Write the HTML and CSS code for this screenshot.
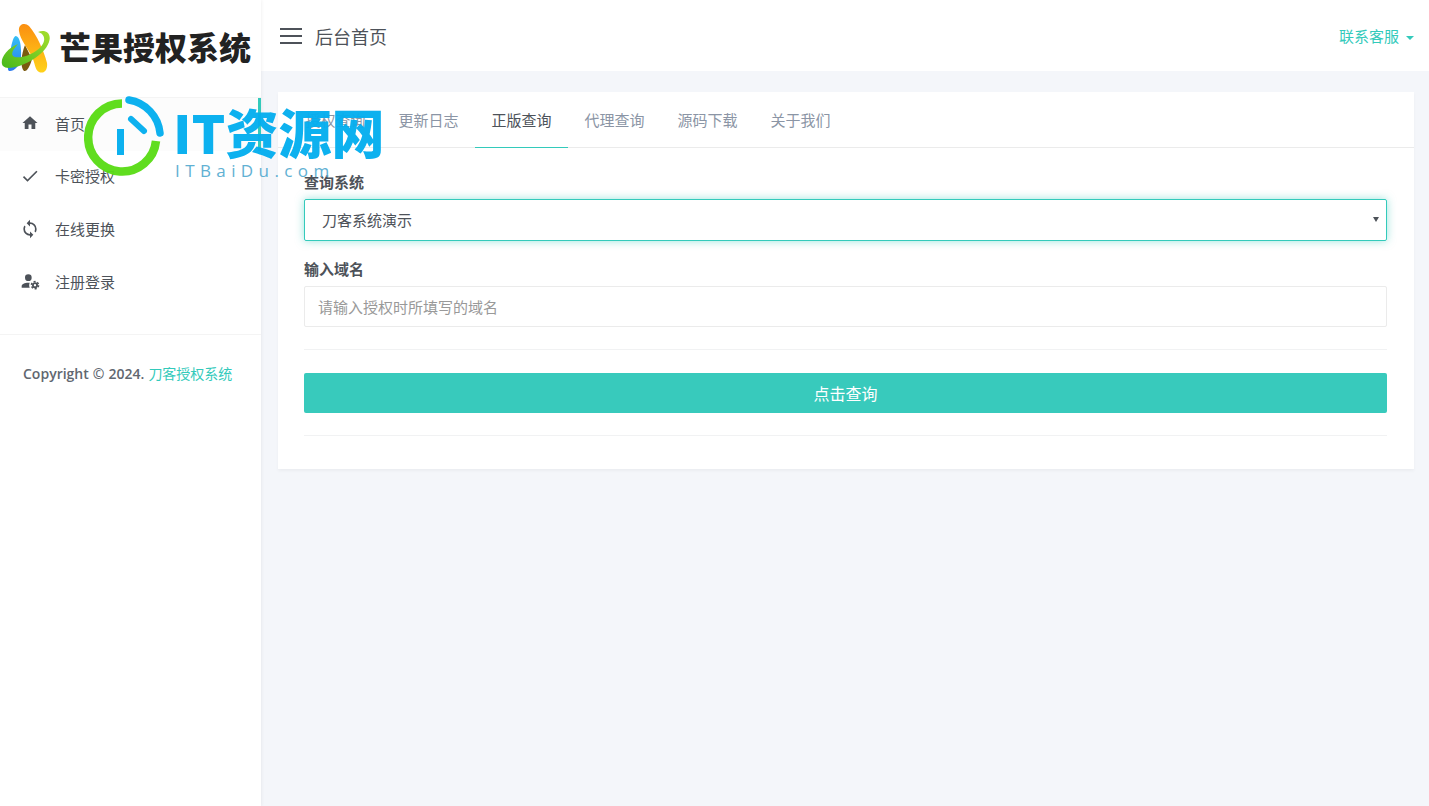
FILE: index.html
```html
<!DOCTYPE html>
<html lang="zh-CN">
<head>
    <meta charset="UTF-8">
    <title>后台首页</title>
    <link rel="stylesheet" href="styles.css">
</head>
<body>
    <aside class="sidebar">
        <div class="logo">
            <svg class="logo-mark" width="52" height="52" viewBox="0 0 52 52">
                <defs>
                    <linearGradient id="legOrange" x1="0" y1="0" x2="0" y2="1">
                        <stop offset="0" stop-color="#fb8f10"/>
                        <stop offset="1" stop-color="#ffd21a"/>
                    </linearGradient>
                    <linearGradient id="legBlue" x1="0" y1="0" x2="0" y2="1">
                        <stop offset="0" stop-color="#35c0f5"/>
                        <stop offset="1" stop-color="#2a78ee"/>
                    </linearGradient>
                    <linearGradient id="swoosh" x1="0" y1="1" x2="1" y2="0">
                        <stop offset="0" stop-color="#46b81c"/>
                        <stop offset="1" stop-color="#a5de2c"/>
                    </linearGradient>
                </defs>
                <path d="M9 48C7 47 8 40 10 31C11 23 13 14 15.500 13C21 13 21.500 28 21 36C20 43 13 49 9 48Z" fill="url(#legBlue)"/>
                <path d="M24 48C20 44 21 32 25 22L32 36C30 43 27 49 24 48Z" fill="#7a5a10"/>
                <path d="M19 8C18 1 25 -1 29 3C37 12 44 28 47 40C48 48 43 51 39 49C35 47 35 40 32 34C28 25 20 17 19 8Z" fill="url(#legOrange)"/>
                <path d="M3 43C-1 38 5 26 18 21C12 28 10 32 15 34C25 36 42 27 44 18C45 13 42 10 38 9C45 6 51 10 49.500 17C47 30 27 42 13 44.500C8 45.500 5 45 3 43Z" fill="url(#swoosh)"/>
            </svg>
            <span class="logo-text">芒果授权系统</span>
        </div>
        <ul class="menu">
            <li class="active">
                <svg class="menu-icon" width="20" height="20" viewBox="-1.300 -1.300 26.600 26.600"><path d="M10,20V14H14V20H19V12H22L12,3L2,12H5V20H10Z"/></svg>
                <span>首页</span>
            </li>
            <li>
                <svg class="menu-icon" width="20" height="20" viewBox="0 0 24 24"><path d="M21,7L9,19L3.500,13.500L4.910,12.090L9,16.170L19.590,5.590L21,7Z"/></svg>
                <span>卡密授权</span>
            </li>
            <li>
                <svg class="menu-icon" width="20" height="20" viewBox="0 0 24 24"><path d="M12,18A6,6 0 0,1 6,12C6,11 6.250,10.030 6.700,9.200L5.240,7.740C4.460,8.970 4,10.430 4,12A8,8 0 0,0 12,20V23L16,19L12,15M12,4V1L8,5L12,9V6A6,6 0 0,1 18,12C18,13 17.750,13.970 17.300,14.800L18.760,16.260C19.540,15.030 20,13.570 20,12A8,8 0 0,0 12,4Z"/></svg>
                <span>在线更换</span>
            </li>
            <li>
                <svg class="menu-icon" width="20" height="20" viewBox="0 0 24 24"><circle cx="10" cy="8" r="4"/><path d="M10 14C5.580 14 2 15.790 2 18V20H11.680A7 7 0 0 1 11 17A7 7 0 0 1 11.680 14.110C11.130 14.040 10.570 14 10 14Z"/><circle cx="18" cy="17" r="2.500" fill="none" stroke="#4d5259" stroke-width="2.200"/><circle cx="18" cy="17" r="4.300" fill="none" stroke="#4d5259" stroke-width="1.800" stroke-dasharray="2.500 2"/></svg>
                <span>注册登录</span>
            </li>
        </ul>
        <div class="copyright">Copyright © 2024. <a href="#">刀客授权系统</a></div>
    </aside>

    <div class="main">
        <header class="topbar">
            <div class="topbar-left">
                <div class="toggle"><i></i><i></i><i></i></div>
                <span class="page-title">后台首页</span>
            </div>
            <a class="service" href="#">联系客服<b class="caret"></b></a>
        </header>

        <div class="content">
            <div class="card">
                <ul class="tabs">
                    <li>授权查询</li>
                    <li>更新日志</li>
                    <li class="active">正版查询</li>
                    <li>代理查询</li>
                    <li>源码下载</li>
                    <li>关于我们</li>
                </ul>
                <div class="card-body">
                    <div class="form-group">
                        <label>查询系统</label>
                        <div class="select-box">
                            <span>刀客系统演示</span>
                            <b class="select-arrow"></b>
                        </div>
                    </div>
                    <div class="form-group">
                        <label>输入域名</label>
                        <input class="form-input" type="text" placeholder="请输入授权时所填写的域名">
                    </div>
                    <hr class="divider">
                    <button class="submit-btn">点击查询</button>
                    <hr class="divider">
                </div>
            </div>
        </div>
    </div>

    <!-- site watermark laid over the page -->
    <div class="watermark">
        <svg class="wm-ring" width="80" height="82" viewBox="0 0 80 82">
            <path d="M38 7.500A34 34 0 1 0 72 45" fill="none" stroke="#5adc16" stroke-width="8.500"/>
            <path d="M45 4A37 37 0 0 1 76 37" fill="none" stroke="#04aeef" stroke-width="7.500" stroke-linecap="round"/>
            <path d="M47 23L60 35" fill="none" stroke="#04aeef" stroke-width="6" stroke-linecap="round"/>
            <rect x="33" y="33" width="7" height="26" fill="#04aeef"/>
        </svg>
        <div class="wm-name">IT资源网</div>
        <div class="wm-url">ITBaiDu.com</div>
    </div>
</body>
</html>
```

FILE: styles.css
```css
* {
    margin: 0;
    padding: 0;
    box-sizing: border-box;
}

body {
    font-family: "Noto Sans CJK SC", "Open Sans", sans-serif;
    font-size: 15px;
    color: #4d5259;
    background-color: #f4f6fa;
    display: flex;
    height: 806px;
    overflow: hidden;
}

a {
    text-decoration: none;
}

ul {
    list-style: none;
}

.sidebar {
    width: 261px;
    flex-shrink: 0;
    background: #fff;
    box-shadow: 1px 0 3px rgba(0, 0, 0, 0.05);
    position: relative;
}

.logo {
    height: 98px;
    display: flex;
    align-items: center;
    border-bottom: 1px solid #f4f4f4;
}

.logo-mark {
    margin-right: 7px;
    margin-top: 0;
}

.logo-text {
    font-size: 32px;
    font-weight: 900;
    color: #222;
    margin-top: -6px;
    white-space: nowrap;
}

.menu li {
    height: 52.670px;
    display: flex;
    align-items: center;
    padding-left: 20px;
    padding-bottom: 2px;
    color: #4d5259;
}

.menu li.active {
    background: #fcfcfc;
    border-right: 3px solid #33cabb;
}

.menu-icon {
    margin-right: 15px;
    fill: #4d5259;
}

.copyright {
    margin-top: 25px;
    padding: 28px 23px 0;
    border-top: 1px solid #f4f4f4;
    font-family: "Open Sans", "Noto Sans CJK SC", sans-serif;
    font-size: 14px;
    font-weight: 600;
    word-spacing: 0.400px;
    color: #616770;
    white-space: nowrap;
}

.copyright a {
    color: #33cabb;
    font-family: "Noto Sans CJK SC", sans-serif;
    font-weight: 400;
}

.main {
    flex: 1;
    min-width: 0;
}

.topbar {
    height: 71px;
    background: #fff;
    display: flex;
    justify-content: space-between;
    align-items: center;
    padding: 0 15px 0 19px;
}

.topbar-left {
    display: flex;
    align-items: center;
}

.toggle {
    width: 22px;
    margin-right: 13px;
}

.toggle i {
    display: block;
    height: 2px;
    background: #4d5259;
    margin-bottom: 5px;
}

.toggle i:last-child {
    margin-bottom: 0;
}

.page-title {
    font-size: 18px;
    color: #4d5259;
}

.service {
    color: #33cabb;
    font-size: 15px;
}

.caret {
    display: inline-block;
    margin-left: 7px;
    vertical-align: 2px;
    border-top: 4.500px solid #33cabb;
    border-left: 4.500px solid transparent;
    border-right: 4.500px solid transparent;
}

.content {
    padding: 21px 15px 21px 17px;
}

.card {
    background: #fff;
    box-shadow: 0 2px 3px rgba(0, 0, 0, 0.04);
}

.tabs {
    display: flex;
    height: 56px;
    padding-left: 11px;
    border-bottom: 1px solid #ebebeb;
}

.tabs li {
    padding: 0 16.500px;
    line-height: 55px;
    height: 56px;
    color: #8b95a5;
    white-space: nowrap;
}

.tabs li.active {
    color: #4d5259;
    border-bottom: 1px solid #33cabb;
}

.card-body {
    padding: 24px 27px 33px 26px;
}

.form-group {
    margin-bottom: 18px;
}

.form-group label {
    display: block;
    font-weight: 600;
    line-height: 20px;
    margin-bottom: 7px;
    color: #4d5259;
}

.select-box {
    height: 42px;
    padding: 0 7px 2px 17px;
    display: flex;
    align-items: center;
    justify-content: space-between;
    border: 1px solid #33cabb;
    border-radius: 2px;
    box-shadow: 0 0 8px rgba(51, 202, 187, 0.5);
}

.select-arrow {
    border-top: 5px solid #4d5259;
    border-left: 3px solid transparent;
    border-right: 3px solid transparent;
}

.form-input {
    display: block;
    width: 100%;
    height: 41px;
    padding: 0 13px;
    font: inherit;
    color: #4d5259;
    border: 1px solid #ebebeb;
    border-radius: 2px;
    outline: none;
}

.form-input::placeholder {
    color: #999;
}

.divider {
    border: none;
    border-top: 1px solid #f1f2f3;
}

.form-group + .divider {
    margin-top: 22px;
}

.submit-btn {
    display: block;
    width: 100%;
    height: 40px;
    margin: 23px 0 22px;
    background: #38cabc;
    color: #fff;
    font: inherit;
    font-size: 16px;
    font-weight: 400;
    border: none;
    border-radius: 2px;
}

.watermark {
    position: absolute;
    left: 84px;
    top: 96px;
    width: 300px;
    height: 90px;
    opacity: 0.96;
}

.wm-ring {
    position: absolute;
    left: 0;
    top: 0;
}

.wm-name {
    position: absolute;
    left: 89px;
    top: 0;
    font-size: 53px;
    line-height: 70px;
    font-weight: 900;
    color: #04aeef;
    white-space: nowrap;
}

.wm-url {
    position: absolute;
    left: 91px;
    top: 64px;
    font-family: "Open Sans", sans-serif;
    font-size: 17px;
    line-height: 22px;
    letter-spacing: 5.400px;
    color: #5aaed2;
    white-space: nowrap;
}
```
